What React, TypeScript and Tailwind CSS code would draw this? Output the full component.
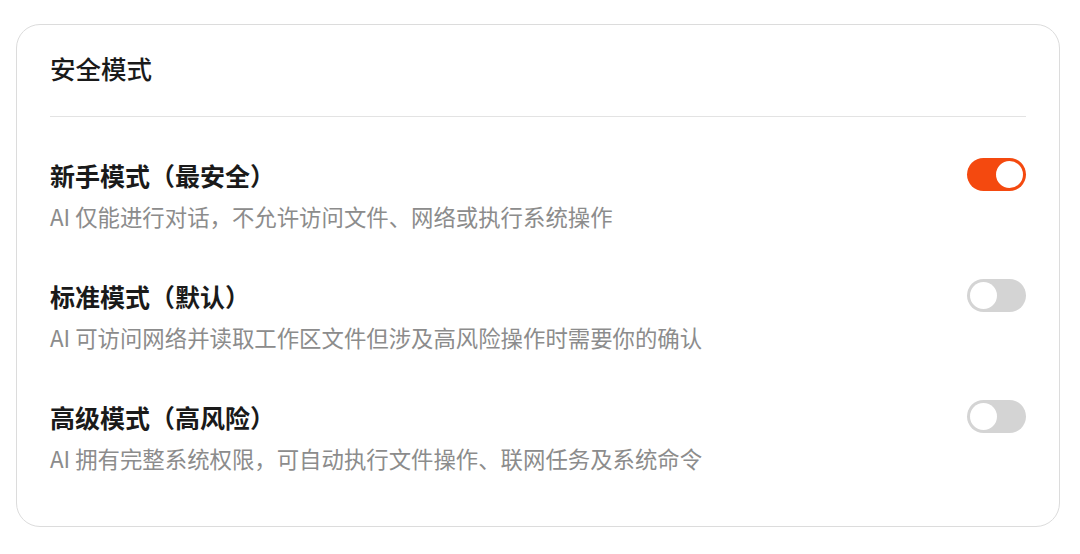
import React, { useState } from "react";

const font = { fontFamily: '"Noto Sans CJK SC", "Noto Sans", sans-serif' };

function Toggle({ on, onClick }: { on: boolean; onClick: () => void }) {
  return (
    <button
      type="button"
      onClick={onClick}
      className={`flex h-[33px] w-[59px] shrink-0 items-center rounded-full p-[3px] transition-colors ${
        on ? "justify-end bg-[#f4490f]" : "justify-start bg-[#d4d4d4]"
      }`}
    >
      <span className="block h-[27px] w-[27px] rounded-full bg-white" />
    </button>
  );
}

const modes = [
  { title: "新手模式（最安全）", desc: "AI 仅能进行对话，不允许访问文件、网络或执行系统操作" },
  { title: "标准模式（默认）", desc: "AI 可访问网络并读取工作区文件但涉及高风险操作时需要你的确认" },
  { title: "高级模式（高风险）", desc: "AI 拥有完整系统权限，可自动执行文件操作、联网任务及系统命令" },
];

export default function App() {
  const [active, setActive] = useState(0);
  return (
    <div className="min-h-[554px] w-[1080px] bg-white pl-[16px] pt-[24px]" style={font}>
      <div className="w-[1044px] h-[503px] rounded-[24px] border border-[#dcdcdc] px-[33px] pt-[27px]">
        <div className="text-[25.5px] leading-[32px] font-medium text-[#1a1a1a]">安全模式</div>
        <div className="mt-[32px] h-px bg-[#e3e3e3]" />
        <div className="flex flex-col gap-[48px] pt-[41px]">
          {modes.map((m, i) => (
            <div key={i} className="flex flex-col gap-[10px]">
              <div className="flex items-center justify-between">
                <div className="text-[25px] leading-[32px] font-semibold text-[#1a1a1a]">{m.title}</div>
                <Toggle on={active === i} onClick={() => setActive(i)} />
              </div>
              <div className="text-[22.4px] leading-[30px] text-[#8c8c8c]">{m.desc}</div>
            </div>
          ))}
        </div>
      </div>
    </div>
  );
}
